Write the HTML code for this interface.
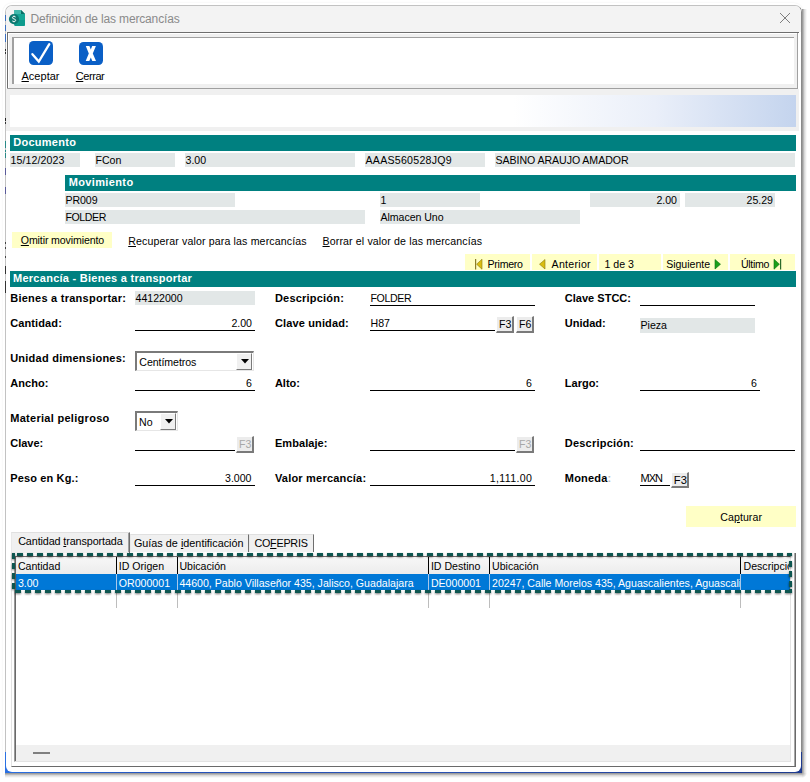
<!DOCTYPE html>
<html><head><meta charset="utf-8">
<style>
*{box-sizing:border-box;margin:0;padding:0}
html,body{width:810px;height:782px;overflow:hidden;background:#fff}
body{position:relative;font-family:"Liberation Sans",sans-serif;font-size:11px;color:#000}
.a{position:absolute}
.t{position:absolute;white-space:nowrap;line-height:1}
u{text-decoration:underline;text-underline-offset:1px}
</style></head><body>
<div class="a" style="left:802px;top:9px;width:5px;height:764px;background:linear-gradient(90deg,rgba(0,0,0,.45),rgba(0,0,0,.16) 45%,rgba(0,0,0,0))"></div>
<div class="a" style="left:5px;top:773px;width:797px;height:5px;background:linear-gradient(rgba(0,0,0,.45),rgba(0,0,0,.16) 45%,rgba(0,0,0,0))"></div>
<div class="a" style="left:802px;top:773px;width:5px;height:5px;background:radial-gradient(circle at 0 0,rgba(0,0,0,.36),rgba(0,0,0,0) 5px)"></div>
<div class="a" style="left:3px;top:3px;width:800px;height:771px;border-radius:9px 9px 0 0;box-shadow:0 0 2px rgba(0,0,0,.08)"></div>
<div class="a" style="left:5px;top:5px;width:797px;height:768px;background:#fff;border:1px solid #c2c2c2;border-right-color:#8a8a8a;border-radius:7px 7px 0 0"></div>
<div class="a" style="left:5px;top:752px;width:797px;height:21px;background:linear-gradient(90deg,#2a70e2,#2552bb 20%,#2a50b0 60%,#1d3a8e)"></div>
<div class="a" style="left:6px;top:752px;width:795px;height:20px;background:#fff;border-radius:0 0 6px 6px"></div>
<div class="a" style="left:5px;top:15px;width:1px;height:6px;background:#3a6fc0;"></div>
<div class="a" style="left:5px;top:25px;width:1px;height:6px;background:#3a6fc0;"></div>
<div class="a" style="left:5px;top:34px;width:1px;height:8px;background:#3a6fc0;"></div>
<div class="a" style="left:5px;top:49px;width:1px;height:2px;background:#333;"></div>
<div class="a" style="left:5px;top:52px;width:1px;height:2px;background:#333;"></div>
<div class="a" style="left:5px;top:118px;width:1px;height:3px;background:#222;"></div>
<div class="a" style="left:5px;top:122px;width:1px;height:2px;background:#333;"></div>
<div class="a" style="left:5px;top:141px;width:1px;height:7px;background:#2a8a88;"></div>
<div class="a" style="left:5px;top:150px;width:1px;height:2px;background:#2a8a88;"></div>
<div class="a" style="left:5px;top:153px;width:1px;height:5px;background:#2a8a88;"></div>
<div class="a" style="left:5px;top:168px;width:1px;height:7px;background:#5a5a9a;"></div>
<div class="a" style="left:5px;top:187px;width:1px;height:7px;background:#5a5a9a;"></div>
<div class="a" style="left:5px;top:242px;width:1px;height:2px;background:#444;"></div>
<div class="a" style="left:5px;top:247px;width:1px;height:2px;background:#444;"></div>
<div class="a" style="left:5px;top:256px;width:1px;height:2px;background:#444;"></div>
<div class="a" style="left:5px;top:266px;width:1px;height:8px;background:#333;"></div>
<div class="a" style="left:5px;top:281px;width:1px;height:12px;background:#333;"></div>
<div class="a" style="left:6px;top:6px;width:795px;height:26px;background:#f3f3f3;border-radius:6px 6px 0 0"></div>
<svg class="a" style="left:8px;top:9px" width="18" height="18" viewBox="0 0 18 18">
  <path d="M6.3 1 H13 L17 5 V15.5 Q17 17 15.5 17 H7.8 Q6.3 17 6.3 15.5 Z" fill="#14a596"/>
  <path d="M6.3 1 H13 V5 H6.3 Z" fill="#40b8ab"/>
  <path d="M13 1 L17 5 H13 Z" fill="#0a6e66"/>
  <path d="M6.3 11 H17 V15.5 Q17 17 15.5 17 H7.8 Q6.3 17 6.3 15.5 Z" fill="#0d9a8c"/>
  <circle cx="6" cy="10.1" r="5.1" fill="#0b7870"/>
<path d="M7.7 8.1 Q7.2 7.5 6 7.5 Q4.4 7.5 4.4 8.7 Q4.4 9.6 6 9.9 Q7.7 10.3 7.7 11.3 Q7.7 12.5 6 12.5 Q4.7 12.5 4.2 11.8 M6 6.6 V7.5 M6 12.5 V13.3" stroke="#fff" stroke-width=".9" fill="none"/>
</svg>
<div class="t" style="top:13px;font-size:12px;letter-spacing:-0.157px;color:#8a8a8a;left:30.5px;">Definición de las mercancías</div>
<svg class="a" style="left:779px;top:12px" width="12" height="12" viewBox="0 0 12 12"><path d="M1 1 L11 11 M11 1 L1 11" stroke="#707070" stroke-width=".9"/></svg>
<div class="a" style="left:7px;top:32px;width:792px;height:1px;background:#6e6e6e;"></div>
<div class="a" style="left:7px;top:32px;width:1px;height:57px;background:#6e6e6e;"></div>
<div class="a" style="left:8px;top:33px;width:790px;height:55px;background:#f0f0f0;border-top:1px solid #fff;border-left:1px solid #fff"></div>
<div class="a" style="left:797px;top:33px;width:1px;height:56px;background:#a0a0a0;"></div>
<div class="a" style="left:7px;top:88px;width:791px;height:1px;background:#a0a0a0;"></div>
<div class="a" style="left:12px;top:37px;width:782px;height:47px;background:#fff;border-top:1px solid #a0a0a0;border-left:2px solid #a0a0a0"></div>
<svg class="a" style="left:29px;top:41px" width="24" height="24" viewBox="0 0 24 24"><rect x="0" y="0" width="24" height="24" rx="4.5" fill="#0a5fc6"/><path d="M3.4 13.2 L9.8 20.6 L20.3 3.2" stroke="#fff" stroke-width="2.3" fill="none" stroke-linecap="round"/></svg>
<svg class="a" style="left:79px;top:41px" width="24" height="24" viewBox="0 0 24 24"><rect x="0" y="1" width="24" height="23" rx="4.5" fill="#0a5fc6"/><path d="M6.8 5 H10.4 L11.8 8.4 L13.2 5 H16.9 L13.8 12.4 L17 20 H13.3 L11.8 16.6 L10.3 20 H6.7 L9.8 12.4 Z" fill="#fff"/></svg>
<div class="t" style="top:71px;font-size:11px;letter-spacing:0.011px;left:21.5px;"><u>A</u>ceptar</div>
<div class="t" style="top:71px;font-size:11px;letter-spacing:-0.448px;left:75.8px;"><u>C</u>errar</div>
<div class="a" style="left:6px;top:89px;width:793px;height:42px;background:#f0f0f0;"></div>
<div class="a" style="left:10px;top:95px;width:786px;height:32px;background:linear-gradient(90deg,#fff 0%,#fff 64%,#eaeff9 82%,#c4d4ee 100%);"></div>
<div class="a" style="left:10px;top:135px;width:786px;height:16px;background:#008080;"></div>
<div class="t" style="top:137px;font-size:11px;letter-spacing:0.278px;font-weight:700;color:#fff;left:13.2px;">Documento</div>
<div class="a" style="left:10px;top:153px;width:70px;height:14px;background:#e2e7e7;"></div>
<div class="t" style="top:155px;font-size:10.6px;letter-spacing:0.097px;left:10.5px;">15/12/2023</div>
<div class="a" style="left:95px;top:153px;width:80px;height:14px;background:#e2e7e7;"></div>
<div class="t" style="top:155px;font-size:10.6px;left:95.5px;">FCon</div>
<div class="a" style="left:185px;top:153px;width:170px;height:14px;background:#e2e7e7;"></div>
<div class="t" style="top:155px;font-size:10.6px;left:185.5px;">3.00</div>
<div class="a" style="left:365px;top:153px;width:120px;height:14px;background:#e2e7e7;"></div>
<div class="t" style="top:155px;font-size:10.6px;letter-spacing:0.258px;left:365.5px;">AAAS560528JQ9</div>
<div class="a" style="left:495px;top:153px;width:300px;height:14px;background:#e2e7e7;"></div>
<div class="t" style="top:155px;font-size:10.6px;letter-spacing:-0.061px;left:495.5px;">SABINO ARAUJO AMADOR</div>
<div class="a" style="left:65px;top:175px;width:731px;height:16px;background:#008080;"></div>
<div class="t" style="top:177px;font-size:11px;letter-spacing:0.367px;font-weight:700;color:#fff;left:68.7px;">Movimiento</div>
<div class="a" style="left:65px;top:193px;width:170px;height:14px;background:#e2e7e7;"></div>
<div class="t" style="top:195px;font-size:10.6px;letter-spacing:-0.081px;left:65.5px;">PR009</div>
<div class="a" style="left:380px;top:193px;width:100px;height:14px;background:#e2e7e7;"></div>
<div class="t" style="top:195px;font-size:10.6px;left:380.5px;">1</div>
<div class="a" style="left:590px;top:193px;width:90px;height:14px;background:#e2e7e7;"></div>
<div class="t" style="top:195px;font-size:10.6px;left:377px;width:300px;text-align:right;">2.00</div>
<div class="a" style="left:685px;top:193px;width:90px;height:14px;background:#e2e7e7;"></div>
<div class="t" style="top:195px;font-size:10.6px;left:473px;width:300px;text-align:right;">25.29</div>
<div class="a" style="left:65px;top:210px;width:300px;height:14px;background:#e2e7e7;"></div>
<div class="t" style="top:212px;font-size:10.6px;letter-spacing:-0.431px;left:65.5px;">FOLDER</div>
<div class="a" style="left:380px;top:210px;width:200px;height:14px;background:#e2e7e7;"></div>
<div class="t" style="top:212px;font-size:10.6px;letter-spacing:-0.054px;left:380.5px;">Almacen Uno</div>
<div class="a" style="left:12px;top:232px;width:100px;height:16px;background:#ffffc6;"></div>
<div class="t" style="top:235px;font-size:10.6px;letter-spacing:-0.128px;left:20.8px;"><u>O</u>mitir movimiento</div>
<div class="t" style="top:236px;font-size:10.6px;letter-spacing:0.140px;left:128.2px;"><u>R</u>ecuperar valor para las mercancías</div>
<div class="t" style="top:236px;font-size:10.6px;letter-spacing:0.132px;left:322.5px;"><u>B</u>orrar el valor de las mercancías</div>
<div class="a" style="left:465px;top:254px;width:65px;height:16px;background:#ffffc6;"></div>
<div class="a" style="left:532px;top:254px;width:65px;height:16px;background:#ffffc6;"></div>
<div class="a" style="left:599px;top:254px;width:62px;height:16px;background:#ffffc6;"></div>
<div class="a" style="left:663px;top:254px;width:65px;height:16px;background:#ffffc6;"></div>
<div class="a" style="left:730px;top:254px;width:65px;height:16px;background:#ffffc6;"></div>
<svg class="a" style="left:474px;top:258px" width="9" height="12" viewBox="0 0 9 12"><rect x="1" y="1" width="1.2" height="10.5" fill="#8a7d2a"/><path d="M8 1.2 L2.6 6.2 L8 11.2 Z" fill="#d9bd10" stroke="#8a7a10" stroke-width=".6"/></svg>
<div class="t" style="top:259px;font-size:10.6px;letter-spacing:-0.271px;left:487.5px;">Primero</div>
<svg class="a" style="left:538px;top:258px" width="8" height="12" viewBox="0 0 8 12"><path d="M7 1.5 L1.5 6.2 L7 11 Z" fill="#d9bd10" stroke="#8a7a10" stroke-width=".6"/></svg>
<div class="t" style="top:259px;font-size:10.6px;letter-spacing:0.276px;left:551.6px;">Anterior</div>
<div class="t" style="top:259px;font-size:10.6px;letter-spacing:-0.028px;left:604.6px;">1 de 3</div>
<div class="t" style="top:259px;font-size:10.6px;letter-spacing:-0.043px;left:666.2px;">Siguiente</div>
<svg class="a" style="left:714px;top:258px" width="8" height="12" viewBox="0 0 8 12"><path d="M1 1.5 L6.5 6.2 L1 11 Z" fill="#1aa01a" stroke="#107010" stroke-width=".6"/></svg>
<div class="t" style="top:259px;font-size:10.6px;letter-spacing:-0.322px;left:741px;">Último</div>
<svg class="a" style="left:773px;top:258px" width="9" height="12" viewBox="0 0 9 12"><path d="M1 1.2 L6.4 6.2 L1 11.2 Z" fill="#1aa01a" stroke="#107010" stroke-width=".6"/><rect x="7" y="1" width="1.2" height="10.5" fill="#2a6a2a"/></svg>
<div class="a" style="left:10px;top:271px;width:786px;height:16px;background:#008080;"></div>
<div class="t" style="top:273px;font-size:11px;letter-spacing:0.269px;font-weight:700;color:#fff;left:13px;">Mercancía - Bienes a transportar</div>
<div class="t" style="top:293px;font-size:11px;letter-spacing:0.254px;font-weight:700;left:10.2px;">Bienes a transportar:</div>
<div class="a" style="left:135px;top:291px;width:120px;height:14px;background:#e2e7e7;"></div>
<div class="t" style="top:293px;font-size:10.6px;left:135.5px;">44122000</div>
<div class="t" style="top:293px;font-size:11px;letter-spacing:0.213px;font-weight:700;left:274.9px;">Descripción:</div>
<div class="a" style="left:370px;top:305px;width:165px;height:1px;background:#000;"></div>
<div class="t" style="top:293px;font-size:10.6px;letter-spacing:-0.381px;left:370.5px;">FOLDER</div>
<div class="t" style="top:293px;font-size:11px;letter-spacing:0.015px;font-weight:700;left:564.8px;">Clave STCC:</div>
<div class="a" style="left:640px;top:305px;width:115px;height:1px;background:#000;"></div>
<div class="t" style="top:318px;font-size:11px;letter-spacing:0.118px;font-weight:700;left:10.2px;">Cantidad:</div>
<div class="a" style="left:135px;top:330px;width:120px;height:1px;background:#000;"></div>
<div class="t" style="top:318px;font-size:10.6px;left:-48px;width:300px;text-align:right;">2.00</div>
<div class="t" style="top:318px;font-size:11px;letter-spacing:0.144px;font-weight:700;left:274.9px;">Clave unidad:</div>
<div class="a" style="left:370px;top:330px;width:125px;height:1px;background:#000;"></div>
<div class="t" style="top:318px;font-size:10.6px;left:370.5px;">H87</div>
<div class="a" style="left:496px;top:316px;width:18px;height:17px;background:#ececec;border-top:1px solid #fff;border-left:1px solid #fff;border-right:2px solid #7a7a7a;border-bottom:2px solid #7a7a7a"></div>
<div class="t" style="top:319px;font-size:10.6px;left:499px;">F3</div>
<div class="a" style="left:516px;top:316px;width:18px;height:17px;background:#ececec;border-top:1px solid #fff;border-left:1px solid #fff;border-right:2px solid #7a7a7a;border-bottom:2px solid #7a7a7a"></div>
<div class="t" style="top:319px;font-size:10.6px;left:519px;">F6</div>
<div class="t" style="top:318px;font-size:11px;font-weight:700;left:564.8px;">Unidad:</div>
<div class="a" style="left:640px;top:318px;width:115px;height:15px;background:#e2e7e7;"></div>
<div class="t" style="top:320px;font-size:10.6px;left:640.5px;">Pieza</div>
<div class="t" style="top:353px;font-size:11px;letter-spacing:0.239px;font-weight:700;left:10.2px;">Unidad dimensiones:</div>
<div class="a" style="left:135px;top:351px;width:119px;height:20px;background:#fff;border-top:2px solid #7a7a7a;border-left:2px solid #7a7a7a;border-bottom:1px solid #e6e6e6;border-right:1px solid #e6e6e6"></div>
<div class="a" style="left:236px;top:353px;width:16px;height:17px;background:#f0f0f0;border-top:1px solid #fff;border-left:1px solid #fff;border-right:1px solid #7a7a7a;border-bottom:1px solid #7a7a7a"></div>
<svg class="a" style="left:240.5px;top:358.5px" width="8" height="5" viewBox="0 0 8 5"><path d="M0 0 H8 L4 4.5 Z" fill="#000"/></svg>
<div class="t" style="top:357px;font-size:10.6px;letter-spacing:-0.064px;left:139.3px;">Centímetros</div>
<div class="t" style="top:378px;font-size:11px;letter-spacing:0.085px;font-weight:700;left:10.2px;">Ancho:</div>
<div class="a" style="left:135px;top:390px;width:120px;height:1px;background:#000;"></div>
<div class="t" style="top:378px;font-size:10.6px;left:-48px;width:300px;text-align:right;">6</div>
<div class="t" style="top:378px;font-size:11px;font-weight:700;left:274.9px;">Alto:</div>
<div class="a" style="left:370px;top:390px;width:165px;height:1px;background:#000;"></div>
<div class="t" style="top:378px;font-size:10.6px;left:232px;width:300px;text-align:right;">6</div>
<div class="t" style="top:378px;font-size:11px;font-weight:700;left:564.8px;">Largo:</div>
<div class="a" style="left:640px;top:390px;width:120px;height:1px;background:#000;"></div>
<div class="t" style="top:378px;font-size:10.6px;left:457px;width:300px;text-align:right;">6</div>
<div class="t" style="top:413px;font-size:11px;letter-spacing:0.292px;font-weight:700;left:10.2px;">Material peligroso</div>
<div class="a" style="left:135px;top:411px;width:43px;height:20px;background:#fff;border-top:2px solid #7a7a7a;border-left:2px solid #7a7a7a;border-bottom:1px solid #e6e6e6;border-right:1px solid #e6e6e6"></div>
<div class="a" style="left:160px;top:413px;width:16px;height:17px;background:#f0f0f0;border-top:1px solid #fff;border-left:1px solid #fff;border-right:1px solid #7a7a7a;border-bottom:1px solid #7a7a7a"></div>
<svg class="a" style="left:164.5px;top:418.5px" width="8" height="5" viewBox="0 0 8 5"><path d="M0 0 H8 L4 4.5 Z" fill="#000"/></svg>
<div class="t" style="top:417px;font-size:10.6px;left:139px;">No</div>
<div class="t" style="top:438px;font-size:11px;font-weight:700;left:10.2px;">Clave:</div>
<div class="a" style="left:135px;top:450px;width:100px;height:1px;background:#000;"></div>
<div class="a" style="left:236px;top:436px;width:18px;height:17px;background:#ececec;border-top:1px solid #fff;border-left:1px solid #fff;border-right:2px solid #7a7a7a;border-bottom:2px solid #7a7a7a"></div>
<div class="t" style="top:439px;font-size:10.6px;color:#a8a8a8;left:239px;">F3</div>
<div class="t" style="top:438px;font-size:11px;letter-spacing:0.070px;font-weight:700;left:274.9px;">Embalaje:</div>
<div class="a" style="left:370px;top:450px;width:145px;height:1px;background:#000;"></div>
<div class="a" style="left:516px;top:436px;width:18px;height:17px;background:#ececec;border-top:1px solid #fff;border-left:1px solid #fff;border-right:2px solid #7a7a7a;border-bottom:2px solid #7a7a7a"></div>
<div class="t" style="top:439px;font-size:10.6px;color:#a8a8a8;left:519px;">F3</div>
<div class="t" style="top:438px;font-size:11px;letter-spacing:0.213px;font-weight:700;left:564.8px;">Descripción:</div>
<div class="a" style="left:640px;top:450px;width:155px;height:1px;background:#000;"></div>
<div class="t" style="top:473px;font-size:11px;letter-spacing:0.148px;font-weight:700;left:10.2px;">Peso en Kg.:</div>
<div class="a" style="left:135px;top:485px;width:120px;height:1px;background:#000;"></div>
<div class="t" style="top:473px;font-size:10.6px;left:-48.5px;width:300px;text-align:right;">3.000</div>
<div class="t" style="top:473px;font-size:11px;letter-spacing:0.209px;font-weight:700;left:274.9px;">Valor mercancía:</div>
<div class="a" style="left:370px;top:485px;width:165px;height:1px;background:#000;"></div>
<div class="t" style="top:473px;font-size:10.6px;letter-spacing:0.354px;left:232.20000000000005px;width:300px;text-align:right;">1,111.00</div>
<div class="t" style="top:473px;font-size:11px;letter-spacing:0.181px;font-weight:700;left:564.8px;">Moneda<span style="color:#bbb">:</span></div>
<div class="a" style="left:640px;top:485px;width:30px;height:1px;background:#000;"></div>
<div class="t" style="top:473px;font-size:11px;letter-spacing:-0.984px;left:640.5px;">MXN</div>
<div class="a" style="left:671px;top:472px;width:18px;height:16px;background:#ececec;border-top:1px solid #fff;border-left:1px solid #fff;border-right:2px solid #7a7a7a;border-bottom:2px solid #7a7a7a"></div>
<div class="t" style="top:475px;font-size:11.2px;left:673.8px;">F3</div>
<div class="a" style="left:686px;top:506px;width:110px;height:21px;background:#ffffc6;"></div>
<div class="t" style="top:512px;font-size:10.6px;letter-spacing:0.056px;left:720.3px;">Ca<u>p</u>turar</div>
<div class="a" style="left:11px;top:552px;width:785px;height:215px;background:#fff;border-left:1px solid #e3e3e3;border-top:1px solid #fff;border-right:1px solid #6a6a6a;border-bottom:1px solid #6a6a6a"></div>
<div class="a" style="left:794px;top:553px;width:1px;height:213px;background:#a8a8a8;"></div>
<div class="a" style="left:11px;top:532px;width:119px;height:21px;background:#f0f0f0;border-top:1px solid #e0e0e0;border-left:1px solid #e8e8e8;border-right:1px solid #6e6e6e"></div>
<div class="a" style="left:128px;top:533px;width:1px;height:19px;background:#a0a0a0;"></div>
<div class="a" style="left:130px;top:534px;width:119px;height:18px;background:#f0f0f0;border-top:1px solid #e0e0e0;border-left:1px solid #e8e8e8;border-right:1px solid #6e6e6e"></div>
<div class="a" style="left:249px;top:534px;width:65px;height:18px;background:#f0f0f0;border-top:1px solid #e0e0e0;border-left:1px solid #e8e8e8;border-right:1px solid #6e6e6e"></div>
<div class="a" style="left:130px;top:552px;width:666px;height:1px;background:#fff;"></div>
<div class="t" style="top:536px;font-size:10.8px;letter-spacing:-0.117px;left:18.2px;">Cantidad <u>t</u>ransportada</div>
<div class="t" style="top:538px;font-size:10.8px;letter-spacing:0.019px;left:133.9px;">Guías de <u>i</u>dentificación</div>
<div class="t" style="top:538px;font-size:10.8px;letter-spacing:-0.252px;left:254.4px;">CO<u>F</u>EPRIS</div>
<div class="a" style="left:14px;top:556px;width:777px;height:206px;background:#fff;border-left:1px solid #9a9a9a;border-top:1px solid #6e6e6e;border-right:1px solid #e3e3e3;border-bottom:1px solid #e3e3e3"></div>
<div class="a" style="left:15px;top:556px;width:1px;height:205px;background:#6a6a6a;"></div>
<div class="a" style="left:16px;top:557px;width:774px;height:17px;background:linear-gradient(#f7f7f7,#ececec);"></div>
<div class="a" style="left:16px;top:574px;width:774px;height:16px;background:#0078d7;"></div>
<div class="a" style="left:116px;top:557px;width:1px;height:17px;background:#000;"></div>
<div class="a" style="left:116px;top:574px;width:1px;height:16px;background:#a9c8ea;"></div>
<div class="a" style="left:116px;top:590px;width:1px;height:18px;background:#bdbdbd;"></div>
<div class="a" style="left:177px;top:557px;width:1px;height:17px;background:#000;"></div>
<div class="a" style="left:177px;top:574px;width:1px;height:16px;background:#a9c8ea;"></div>
<div class="a" style="left:177px;top:590px;width:1px;height:18px;background:#bdbdbd;"></div>
<div class="a" style="left:428px;top:557px;width:1px;height:17px;background:#000;"></div>
<div class="a" style="left:428px;top:574px;width:1px;height:16px;background:#a9c8ea;"></div>
<div class="a" style="left:428px;top:590px;width:1px;height:18px;background:#bdbdbd;"></div>
<div class="a" style="left:489px;top:557px;width:1px;height:17px;background:#000;"></div>
<div class="a" style="left:489px;top:574px;width:1px;height:16px;background:#a9c8ea;"></div>
<div class="a" style="left:489px;top:590px;width:1px;height:18px;background:#bdbdbd;"></div>
<div class="a" style="left:740px;top:557px;width:1px;height:17px;background:#000;"></div>
<div class="a" style="left:740px;top:574px;width:1px;height:16px;background:#a9c8ea;"></div>
<div class="a" style="left:740px;top:590px;width:1px;height:18px;background:#bdbdbd;"></div>
<div class="a" style="left:17px;top:557px;width:772px;height:34px;overflow:hidden">
<div class="t" style="top:4px;font-size:10.6px;left:0.8999999999999986px;">Cantidad</div>
<div class="t" style="top:4px;font-size:10.6px;left:101.8px;">ID Origen</div>
<div class="t" style="top:4px;font-size:10.6px;left:162.39999999999998px;">Ubicación</div>
<div class="t" style="top:4px;font-size:10.6px;left:413.9px;">ID Destino</div>
<div class="t" style="top:4px;font-size:10.6px;left:475.0px;">Ubicación</div>
<div class="t" style="top:4px;font-size:10.6px;left:726.5px;">Descripción</div>
<div class="t" style="top:21px;font-size:10.6px;color:#fff;left:0.8999999999999986px;">3.00</div>
<div class="t" style="top:21px;font-size:10.6px;color:#fff;left:101.8px;">OR000001</div>
<div class="t" style="top:21px;font-size:10.6px;color:#fff;left:162.39999999999998px;">44600, Pablo Villaseñor 435, Jalisco, Guadalajara</div>
<div class="t" style="top:21px;font-size:10.6px;color:#fff;left:413.9px;">DE000001</div>
<div class="a" style="left:475px;top:17px;width:248px;height:17px;overflow:hidden"><div class="t" style="top:4px;font-size:10.6px;color:#fff;left:0px;">20247, Calle Morelos 435, Aguascalientes, Aguascalientes</div>
</div>
</div>
<svg class="a" style="left:0;top:0;filter:drop-shadow(0 1px 1.2px rgba(0,0,0,.55))" width="810" height="782"><g fill="#0d5650"><rect x="17" y="553" width="6" height="3"/><rect x="27" y="553" width="6" height="3"/><rect x="37" y="553" width="6" height="3"/><rect x="47" y="553" width="6" height="3"/><rect x="57" y="553" width="6" height="3"/><rect x="67" y="553" width="6" height="3"/><rect x="77" y="553" width="6" height="3"/><rect x="87" y="553" width="6" height="3"/><rect x="97" y="553" width="6" height="3"/><rect x="107" y="553" width="6" height="3"/><rect x="117" y="553" width="6" height="3"/><rect x="127" y="553" width="6" height="3"/><rect x="137" y="553" width="6" height="3"/><rect x="147" y="553" width="6" height="3"/><rect x="157" y="553" width="6" height="3"/><rect x="167" y="553" width="6" height="3"/><rect x="177" y="553" width="6" height="3"/><rect x="187" y="553" width="6" height="3"/><rect x="197" y="553" width="6" height="3"/><rect x="207" y="553" width="6" height="3"/><rect x="217" y="553" width="6" height="3"/><rect x="227" y="553" width="6" height="3"/><rect x="237" y="553" width="6" height="3"/><rect x="247" y="553" width="6" height="3"/><rect x="257" y="553" width="6" height="3"/><rect x="267" y="553" width="6" height="3"/><rect x="277" y="553" width="6" height="3"/><rect x="287" y="553" width="6" height="3"/><rect x="297" y="553" width="6" height="3"/><rect x="307" y="553" width="6" height="3"/><rect x="317" y="553" width="6" height="3"/><rect x="327" y="553" width="6" height="3"/><rect x="337" y="553" width="6" height="3"/><rect x="347" y="553" width="6" height="3"/><rect x="357" y="553" width="6" height="3"/><rect x="367" y="553" width="6" height="3"/><rect x="377" y="553" width="6" height="3"/><rect x="387" y="553" width="6" height="3"/><rect x="397" y="553" width="6" height="3"/><rect x="407" y="553" width="6" height="3"/><rect x="417" y="553" width="6" height="3"/><rect x="427" y="553" width="6" height="3"/><rect x="437" y="553" width="6" height="3"/><rect x="447" y="553" width="6" height="3"/><rect x="457" y="553" width="6" height="3"/><rect x="467" y="553" width="6" height="3"/><rect x="477" y="553" width="6" height="3"/><rect x="487" y="553" width="6" height="3"/><rect x="497" y="553" width="6" height="3"/><rect x="507" y="553" width="6" height="3"/><rect x="517" y="553" width="6" height="3"/><rect x="527" y="553" width="6" height="3"/><rect x="537" y="553" width="6" height="3"/><rect x="547" y="553" width="6" height="3"/><rect x="557" y="553" width="6" height="3"/><rect x="567" y="553" width="6" height="3"/><rect x="577" y="553" width="6" height="3"/><rect x="587" y="553" width="6" height="3"/><rect x="597" y="553" width="6" height="3"/><rect x="607" y="553" width="6" height="3"/><rect x="617" y="553" width="6" height="3"/><rect x="627" y="553" width="6" height="3"/><rect x="637" y="553" width="6" height="3"/><rect x="647" y="553" width="6" height="3"/><rect x="657" y="553" width="6" height="3"/><rect x="667" y="553" width="6" height="3"/><rect x="677" y="553" width="6" height="3"/><rect x="687" y="553" width="6" height="3"/><rect x="697" y="553" width="6" height="3"/><rect x="707" y="553" width="6" height="3"/><rect x="717" y="553" width="6" height="3"/><rect x="727" y="553" width="6" height="3"/><rect x="737" y="553" width="6" height="3"/><rect x="747" y="553" width="6" height="3"/><rect x="757" y="553" width="6" height="3"/><rect x="767" y="553" width="6" height="3"/><rect x="777" y="553" width="6" height="3"/><rect x="787" y="553" width="5" height="3"/><rect x="12" y="553" width="3" height="6"/><rect x="12" y="563" width="3" height="6"/><rect x="12" y="573" width="3" height="6"/><rect x="12" y="583" width="3" height="6"/><rect x="789" y="561" width="3" height="6"/><rect x="789" y="571" width="3" height="6"/><rect x="789" y="581" width="3" height="6"/><rect x="789" y="589" width="3" height="4"/><rect x="15" y="590" width="6" height="3"/><rect x="25" y="590" width="6" height="3"/><rect x="35" y="590" width="6" height="3"/><rect x="45" y="590" width="6" height="3"/><rect x="55" y="590" width="6" height="3"/><rect x="65" y="590" width="6" height="3"/><rect x="75" y="590" width="6" height="3"/><rect x="85" y="590" width="6" height="3"/><rect x="95" y="590" width="6" height="3"/><rect x="105" y="590" width="6" height="3"/><rect x="115" y="590" width="6" height="3"/><rect x="125" y="590" width="6" height="3"/><rect x="135" y="590" width="6" height="3"/><rect x="145" y="590" width="6" height="3"/><rect x="155" y="590" width="6" height="3"/><rect x="165" y="590" width="6" height="3"/><rect x="175" y="590" width="6" height="3"/><rect x="185" y="590" width="6" height="3"/><rect x="195" y="590" width="6" height="3"/><rect x="205" y="590" width="6" height="3"/><rect x="215" y="590" width="6" height="3"/><rect x="225" y="590" width="6" height="3"/><rect x="235" y="590" width="6" height="3"/><rect x="245" y="590" width="6" height="3"/><rect x="255" y="590" width="6" height="3"/><rect x="265" y="590" width="6" height="3"/><rect x="275" y="590" width="6" height="3"/><rect x="285" y="590" width="6" height="3"/><rect x="295" y="590" width="6" height="3"/><rect x="305" y="590" width="6" height="3"/><rect x="315" y="590" width="6" height="3"/><rect x="325" y="590" width="6" height="3"/><rect x="335" y="590" width="6" height="3"/><rect x="345" y="590" width="6" height="3"/><rect x="355" y="590" width="6" height="3"/><rect x="365" y="590" width="6" height="3"/><rect x="375" y="590" width="6" height="3"/><rect x="385" y="590" width="6" height="3"/><rect x="395" y="590" width="6" height="3"/><rect x="405" y="590" width="6" height="3"/><rect x="415" y="590" width="6" height="3"/><rect x="425" y="590" width="6" height="3"/><rect x="435" y="590" width="6" height="3"/><rect x="445" y="590" width="6" height="3"/><rect x="455" y="590" width="6" height="3"/><rect x="465" y="590" width="6" height="3"/><rect x="475" y="590" width="6" height="3"/><rect x="485" y="590" width="6" height="3"/><rect x="495" y="590" width="6" height="3"/><rect x="505" y="590" width="6" height="3"/><rect x="515" y="590" width="6" height="3"/><rect x="525" y="590" width="6" height="3"/><rect x="535" y="590" width="6" height="3"/><rect x="545" y="590" width="6" height="3"/><rect x="555" y="590" width="6" height="3"/><rect x="565" y="590" width="6" height="3"/><rect x="575" y="590" width="6" height="3"/><rect x="585" y="590" width="6" height="3"/><rect x="595" y="590" width="6" height="3"/><rect x="605" y="590" width="6" height="3"/><rect x="615" y="590" width="6" height="3"/><rect x="625" y="590" width="6" height="3"/><rect x="635" y="590" width="6" height="3"/><rect x="645" y="590" width="6" height="3"/><rect x="655" y="590" width="6" height="3"/><rect x="665" y="590" width="6" height="3"/><rect x="675" y="590" width="6" height="3"/><rect x="685" y="590" width="6" height="3"/><rect x="695" y="590" width="6" height="3"/><rect x="705" y="590" width="6" height="3"/><rect x="715" y="590" width="6" height="3"/><rect x="725" y="590" width="6" height="3"/><rect x="735" y="590" width="6" height="3"/><rect x="745" y="590" width="6" height="3"/><rect x="755" y="590" width="6" height="3"/><rect x="765" y="590" width="6" height="3"/><rect x="775" y="590" width="6" height="3"/><rect x="785" y="590" width="6" height="3"/></g></svg>
<div class="a" style="left:16px;top:745px;width:774px;height:16px;background:#f0f0f0;"></div>
<div class="a" style="left:33px;top:752px;width:17px;height:2px;background:#808080;"></div>
</body></html>
